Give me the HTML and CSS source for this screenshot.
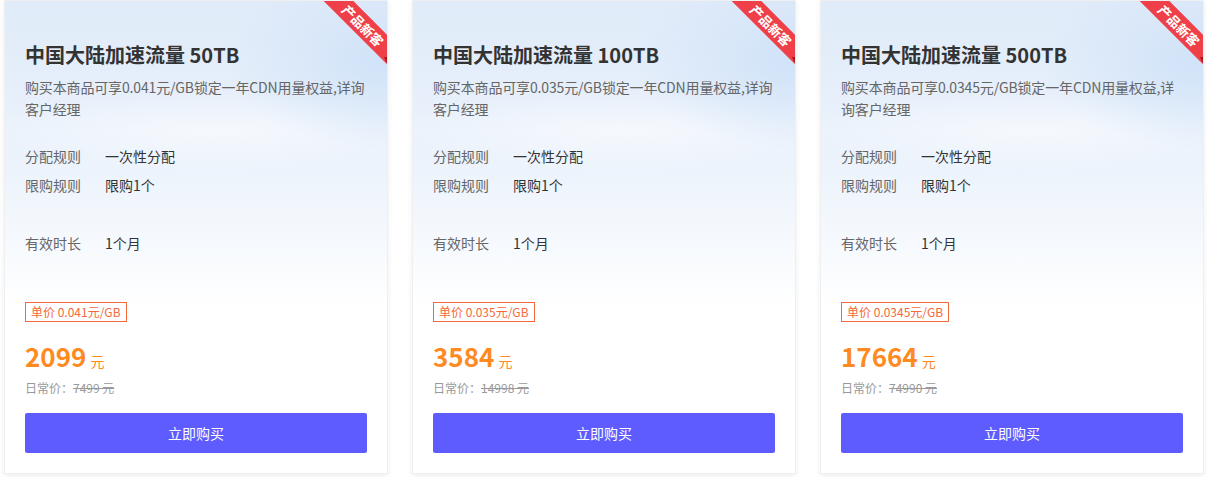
FILE: index.html
```html
<html>
	<head>
		<meta charset="utf-8">
		<title>CDN流量包</title>
		<link rel="stylesheet" href="styles.css">
	</head>
	<body>
		<div class="package-list">
			<div class="package-card">
				<div class="ribbon"><span>产品新客</span></div>
				<div class="ribbon-fold"></div>
				<div class="package-title">中国大陆加速流量 50TB</div>
				<div class="package-desc">购买本商品可享0.041元/GB锁定一年CDN用量权益,详询客户经理</div>
				<div class="package-rows">
					<div class="package-row"><span class="row-label">分配规则</span><span class="row-value">一次性分配</span></div>
					<div class="package-row"><span class="row-label">限购规则</span><span class="row-value">限购1个</span></div>
					<div class="package-row"></div>
					<div class="package-row"><span class="row-label">有效时长</span><span class="row-value">1个月</span></div>
				</div>
				<div class="unit-tag">单价 0.041元/GB</div>
				<div class="price"><span class="price-num">2099</span><span class="price-unit">元</span></div>
				<div class="old-price">日常价：<s>7499 元</s></div>
				<button class="buy-button">立即购买</button>
			</div>
			<div class="package-card">
				<div class="ribbon"><span>产品新客</span></div>
				<div class="ribbon-fold"></div>
				<div class="package-title">中国大陆加速流量 100TB</div>
				<div class="package-desc">购买本商品可享0.035元/GB锁定一年CDN用量权益,详询客户经理</div>
				<div class="package-rows">
					<div class="package-row"><span class="row-label">分配规则</span><span class="row-value">一次性分配</span></div>
					<div class="package-row"><span class="row-label">限购规则</span><span class="row-value">限购1个</span></div>
					<div class="package-row"></div>
					<div class="package-row"><span class="row-label">有效时长</span><span class="row-value">1个月</span></div>
				</div>
				<div class="unit-tag">单价 0.035元/GB</div>
				<div class="price"><span class="price-num">3584</span><span class="price-unit">元</span></div>
				<div class="old-price">日常价：<s>14998 元</s></div>
				<button class="buy-button">立即购买</button>
			</div>
			<div class="package-card">
				<div class="ribbon"><span>产品新客</span></div>
				<div class="ribbon-fold"></div>
				<div class="package-title">中国大陆加速流量 500TB</div>
				<div class="package-desc">购买本商品可享0.0345元/GB锁定一年CDN用量权益,详询客户经理</div>
				<div class="package-rows">
					<div class="package-row"><span class="row-label">分配规则</span><span class="row-value">一次性分配</span></div>
					<div class="package-row"><span class="row-label">限购规则</span><span class="row-value">限购1个</span></div>
					<div class="package-row"></div>
					<div class="package-row"><span class="row-label">有效时长</span><span class="row-value">1个月</span></div>
				</div>
				<div class="unit-tag">单价 0.0345元/GB</div>
				<div class="price"><span class="price-num">17664</span><span class="price-unit">元</span></div>
				<div class="old-price">日常价：<s>74990 元</s></div>
				<button class="buy-button">立即购买</button>
			</div>
		</div>
	</body>
</html>
```

FILE: styles.css
```css
body {
	margin: 0;
	background-color: #ffffff;
	font-family: "Noto Sans CJK SC", "Noto Sans", sans-serif;
}

.package-list {
	display: flex;
	gap: 24px;
	padding: 0 3px 0 4px;
}

.package-card {
	position: relative;
	overflow: hidden;
	width: 384px;
	box-sizing: border-box;
	padding: 40px 20px 20px;
	border: 1px solid #efefef;
	box-shadow: 0px 2px 6px 0px rgba(0,0,0,0.07);
	background:
		radial-gradient(ellipse 160px 90px at 100% 60px, rgba(200,222,248,0.7) 0%, rgba(200,222,248,0) 100%),
		radial-gradient(ellipse 260px 40px at 55% 130px, rgba(255,255,255,0.6) 0%, rgba(255,255,255,0) 100%),
		linear-gradient(180deg, #e0ebf9 0%, #e9f1fb 30%, #f4f8fd 48%, #ffffff 65%);
}

.ribbon {
	position: absolute;
	top: 0;
	right: 0;
	width: 68px;
	height: 64px;
	overflow: hidden;
}

.ribbon > span {
	position: absolute;
	left: -6px;
	top: 14px;
	width: 100px;
	height: 21px;
	line-height: 21px;
	text-align: center;
	background-color: #ef3f48;
	color: #ffffff;
	font-size: 13px;
	font-weight: bold;
	transform: rotate(45deg);
}

.ribbon-fold {
	position: absolute;
	top: 56px;
	right: 0;
	width: 0;
	height: 0;
	border-right: 3px solid #a3121a;
	border-bottom: 6px solid transparent;
}

.package-title {
	font-size: 20px;
	font-weight: bold;
	line-height: 28px;
	color: #333333;
}

.package-desc {
	margin-top: 7px;
	font-size: 14px;
	line-height: 22px;
	letter-spacing: -0.15px;
	color: #666666;
}

.package-rows {
	margin-top: 21px;
}

.package-row {
	display: flex;
	height: 29px;
	align-items: center;
	font-size: 14px;
}

.row-label {
	width: 80px;
	color: #666666;
}

.row-value {
	color: #333333;
}

.unit-tag {
	display: inline-block;
	margin-top: 45px;
	padding: 0 5px;
	height: 18px;
	line-height: 18px;
	font-size: 12px;
	color: #f4683c;
	border: 1px solid #f4683c;
}

.price {
	margin-top: 17px;
	height: 34px;
	line-height: 34px;
	color: #ff8a1f;
}

.price-num {
	font-size: 26px;
	font-weight: bold;
}

.price-unit {
	font-size: 14px;
	margin-left: 4px;
}

.old-price {
	margin-top: 5px;
	line-height: 20px;
	font-size: 12px;
	color: #999999;
}

.buy-button {
	display: block;
	width: 100%;
	height: 40px;
	margin-top: 15px;
	border: none;
	border-radius: 2px;
	background-color: #5f5cff;
	color: #ffffff;
	font-family: "Noto Sans CJK SC", "Noto Sans", sans-serif;
	font-size: 14px;
}
```
